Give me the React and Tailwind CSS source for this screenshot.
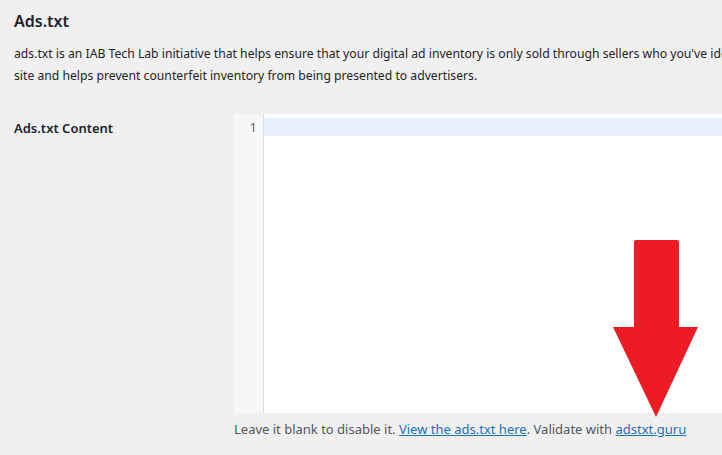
import React from "react";

const Arrow = () => (
  <svg
    className="absolute left-[612px] top-[239px]"
    width="88"
    height="180"
    viewBox="0 0 88 180"
  >
    <path
      d="M22 3 Q22 1 24 1 L65 1 Q67 1 67 3 L67 88 L86 88 L44 178 L1 88 L22 88 Z"
      fill="#ed1c24"
    />
  </svg>
);

const App = () => {
  return (
    <div
      className="relative w-[722px] h-[455px] overflow-hidden bg-[#f0f0f1] text-[#1d2327]"
      style={{ fontFamily: '"Noto Sans", "Open Sans", sans-serif' }}
    >
      <div className="pl-[14px] pt-[8px]">
        <h2 className="text-[16px] font-semibold leading-[26px]">Ads.txt</h2>
        <p className="mt-[9px] text-[12.2px] leading-[22px] whitespace-nowrap">
          ads.txt is an IAB Tech Lab initiative that helps ensure that your digital ad inventory is only sold through sellers who you've identified as authorized.
          <br />
          site and helps prevent counterfeit inventory from being presented to advertisers.
        </p>

        {/* Settings row */}
        <div className="flex mt-[27px]">
          <div className="w-[220px] shrink-0 pt-[5px] text-[13px] font-semibold leading-[18px]">
            Ads.txt Content
          </div>
          <div className="flex flex-col shrink-0">
            <div className="flex w-[600px] h-[299px] bg-white">
              <div className="w-[30px] bg-[#f7f7f7] border-r border-[#ddd] pt-[4px]">
                <div className="h-[18px] pr-[6px] text-right text-[13px] leading-[18px] text-[#666]">
                  1
                </div>
              </div>
              <div className="flex-1 pt-[4px]">
                <div className="h-[18px] bg-[#e8f2fe]" />
              </div>
            </div>
            <p className="mt-[6px] text-[13px] leading-[20px] text-[#50575e] whitespace-nowrap">
              Leave it blank to disable it.{" "}
              <a href="#" className="text-[#2271b1] underline">
                View the ads.txt here
              </a>
              . Validate with{" "}
              <a href="#" className="text-[#2271b1] underline">
                adstxt.guru
              </a>
            </p>
          </div>
        </div>
      </div>
      <Arrow />
    </div>
  );
};

export default App;
